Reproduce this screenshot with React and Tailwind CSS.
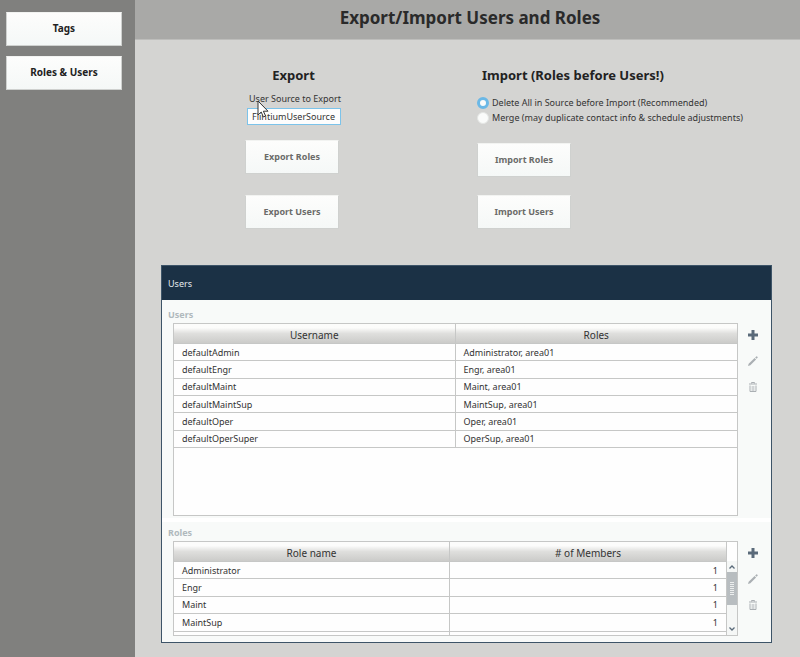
import { useState } from "react";

const users = [
  ["defaultAdmin", "Administrator, area01"],
  ["defaultEngr", "Engr, area01"],
  ["defaultMaint", "Maint, area01"],
  ["defaultMaintSup", "MaintSup, area01"],
  ["defaultOper", "Oper, area01"],
  ["defaultOperSuper", "OperSup, area01"],
];

const roles = [
  ["Administrator", 1],
  ["Engr", 1],
  ["Maint", 1],
  ["MaintSup", 1],
  ["", ""],
];

const buttonLook =
  "h-[34px] border border-[#cfd1cf] border-t-[#f2f3f1] bg-linear-to-b from-[#fdfdfc] to-[#f5f8f7] pb-px font-bold";

function NavButton({ children }) {
  return <button className={`${buttonLook} w-full text-[10px] text-[#222]`}>{children}</button>;
}

function ActionButton({ children }) {
  return <button className={`${buttonLook} w-[94px] text-[#6b6b69]`}>{children}</button>;
}

function Tools({ label }) {
  return (
    <div className="flex w-[33px] shrink-0 flex-col items-center gap-[10px] pt-1 pr-[3px]">
      <button aria-label={`Add ${label}`} className="flex h-4 w-4 items-center justify-center">
        <svg width="10" height="10" viewBox="0 0 10 10" fill="#5a6a7a">
          <path d="M3.5 0h3v3.5H10v3H6.5V10h-3V6.5H0v-3h3.5z" />
        </svg>
      </button>
      <button aria-label={`Edit ${label}`} className="flex h-4 w-4 items-center justify-center">
        <svg width="10" height="10" viewBox="0 0 12 12" fill="#aaafb3">
          <path d="M0 12l.8-2.8L7.9 2.4l1.8 1.8L2.8 11zM8.6 1.7L9.9.5q.5-.4 1 0l.6.6q.4.5 0 1l-1.2 1.3z" />
        </svg>
      </button>
      <button aria-label={`Delete ${label}`} className="flex h-4 w-4 items-center justify-center">
        <svg width="8" height="10" viewBox="0 0 8 10" fill="none" stroke="#aaafb3">
          <path d="M2.5 1.5V.5h3v1M0 2h8M1 3.5v6h6v-6" />
          <path d="M3.2 4v5M4.8 4v5" strokeWidth=".7" />
        </svg>
      </button>
    </div>
  );
}

function HeadCell({ children, className = "" }) {
  return (
    <th
      scope="col"
      className={`h-5 border-b border-[#c6c7c6] bg-linear-to-b from-[#fcfcfb] from-20% via-[#dfdfdd] via-50% to-[#cbcbc9] p-0 pt-[3px] text-[10px] leading-4 font-normal text-[#333] ${className}`}
    >
      {children}
    </th>
  );
}

function ScrollBar() {
  return (
    <div className="flex w-[11px] shrink-0 flex-col border-l border-[#c6c7c6] pt-[19px]">
      <div className="flex flex-1 flex-col items-center bg-[#f5f7f6]">
        <svg className="h-[11px]" width="8" viewBox="0 0 8 11" fill="none" stroke="#5a6a7a" strokeWidth="1.3">
          <path d="M1.5 7.5L4 5l2.5 2.5" />
        </svg>
        <div className="flex h-[33px] w-full flex-col items-center justify-center gap-px bg-[#b8bdc0]">
          {[0, 1, 2, 3, 4, 5, 6].map((i) => (
            <span key={i} className="h-px w-1 bg-[#eceeee]" />
          ))}
        </div>
        <svg className="mt-auto h-[11px]" width="8" viewBox="0 0 8 11" fill="none" stroke="#5a6a7a" strokeWidth="1.3">
          <path d="M1.5 3.5L4 6l2.5-2.5" />
        </svg>
      </div>
    </div>
  );
}

export default function App() {
  const [source, setSource] = useState("FlintiumUserSource");
  const [mode, setMode] = useState("delete");
  const radioLook =
    "m-0 h-3 w-3 shrink-0 appearance-none rounded-full border border-[#e4e6e4] bg-[#fafbfa] checked:border-[3px] checked:border-[#6bb8e6]";

  return (
    <div className="flex min-h-screen bg-[#d4d4d2] font-['Noto_Sans','Open_Sans',sans-serif] text-[9px] leading-[15px] text-[#333]">
      <nav className="flex w-[135px] shrink-0 flex-col gap-[10px] bg-[#80807e] px-[6px] pt-3 pr-[13px]">
        <NavButton>Tags</NavButton>
        <NavButton>Roles &amp; Users</NavButton>
      </nav>

      <main className="flex min-w-0 flex-1 flex-col pb-[14px]">
        <header className="h-10 border-b border-[#bdbdbb] bg-[#a9a9a7] pt-[6px] pl-[5px] text-center">
          <h1 className="text-[17px] leading-6 font-bold text-[#2a2a2a]">Export/Import Users and Roles</h1>
        </header>

        <div className="flex h-[225px] items-start pt-[25px] pl-[110px]">
          <section className="relative flex w-[232px] shrink-0 flex-col items-start">
            <h2 className="w-[97px] text-center text-[13px] leading-5 font-bold text-[#222]">Export</h2>
            <label htmlFor="source" className="mt-[6px] pl-1">
              User Source to Export
            </label>
            <input
              id="source"
              value={source}
              onChange={(e) => setSource(e.target.value)}
              className="mt-[2px] ml-[2px] h-[17px] w-[94px] border border-[#7cc3ea] bg-[#fdfdfd] px-1 outline-none"
            />
            <div className="mt-[15px] flex flex-col gap-[21px]">
              <ActionButton>Export Roles</ActionButton>
              <ActionButton>Export Users</ActionButton>
            </div>
            <svg className="absolute top-[35px] left-3" width="12" height="19" viewBox="0 0 12 19">
              <path d="M1 1v14l3.2-3 2.2 5 2.2-1-2.2-4.8H11z" fill="#fff" stroke="#333" />
            </svg>
          </section>

          <section className="flex min-w-0 flex-col items-start">
            <h2 className="pl-[5px] text-[13px] leading-5 font-bold text-[#222]">Import (Roles before Users!)</h2>
            <div className="mt-[10px] flex flex-col">
              <label className="flex items-center gap-[3px] whitespace-nowrap">
                <input
                  type="radio"
                  name="mode"
                  checked={mode === "delete"}
                  onChange={() => setMode("delete")}
                  className={radioLook}
                />
                Delete All in Source before Import (Recommended)
              </label>
              <label className="flex items-center gap-[3px] whitespace-nowrap">
                <input
                  type="radio"
                  name="mode"
                  checked={mode === "merge"}
                  onChange={() => setMode("merge")}
                  className={radioLook}
                />
                Merge (may duplicate contact info &amp; schedule adjustments)
              </label>
            </div>
            <div className="mt-[18px] flex flex-col gap-[18px]">
              <ActionButton>Import Roles</ActionButton>
              <ActionButton>Import Users</ActionButton>
            </div>
          </section>
        </div>

        <section className="mr-7 ml-[26px] border border-[#3d5468] bg-[#f8faf9]">
          <div className="flex h-[34px] items-center bg-[#1b3145] px-[6px] text-[#e4e9ed]">Users</div>

          <div className="border-b-4 border-white pt-[7px] pb-[2px]">
            <h3 className="pl-[6px] font-bold text-[#b0b9bd]">Users</h3>
            <div className="mt-px flex pl-[11px]">
              <div className="h-[193px] min-w-0 flex-1 border border-[#c6c7c6] bg-[#fefefe]">
                <table className="h-[124px] w-full table-fixed border-separate border-spacing-0">
                  <thead>
                    <tr>
                      <HeadCell className="border-r">Username</HeadCell>
                      <HeadCell>Roles</HeadCell>
                    </tr>
                  </thead>
                  <tbody>
                    {users.map(([name, role]) => (
                      <tr key={name}>
                        <td className="h-[17px] border-r border-b border-[#c6c7c6] py-0 pl-2">{name}</td>
                        <td className="h-[17px] border-b border-[#c6c7c6] py-0 pl-2">{role}</td>
                      </tr>
                    ))}
                  </tbody>
                </table>
              </div>
              <Tools label="user" />
            </div>
          </div>

          <div className="pt-[3px] pb-[6px]">
            <h3 className="pl-[6px] font-bold text-[#b0b9bd]">Roles</h3>
            <div className="mt-px flex pl-[11px]">
              <div className="flex h-[95px] min-w-0 flex-1 overflow-hidden border border-[#c6c7c6] bg-[#fefefe]">
                <div className="min-w-0 flex-1">
                  <table className="h-[107px] w-full table-fixed border-separate border-spacing-0">
                    <thead>
                      <tr>
                        <HeadCell className="border-r">Role name</HeadCell>
                        <HeadCell># of Members</HeadCell>
                      </tr>
                    </thead>
                    <tbody>
                      {roles.map(([name, count]) => (
                        <tr key={name}>
                          <td className="h-[17px] border-r border-b border-[#c6c7c6] py-0 pl-2">{name}</td>
                          <td className="h-[17px] border-b border-[#c6c7c6] py-0 pr-2 text-right">{count}</td>
                        </tr>
                      ))}
                    </tbody>
                  </table>
                </div>
                <ScrollBar />
              </div>
              <Tools label="role" />
            </div>
          </div>
        </section>
      </main>
    </div>
  );
}
